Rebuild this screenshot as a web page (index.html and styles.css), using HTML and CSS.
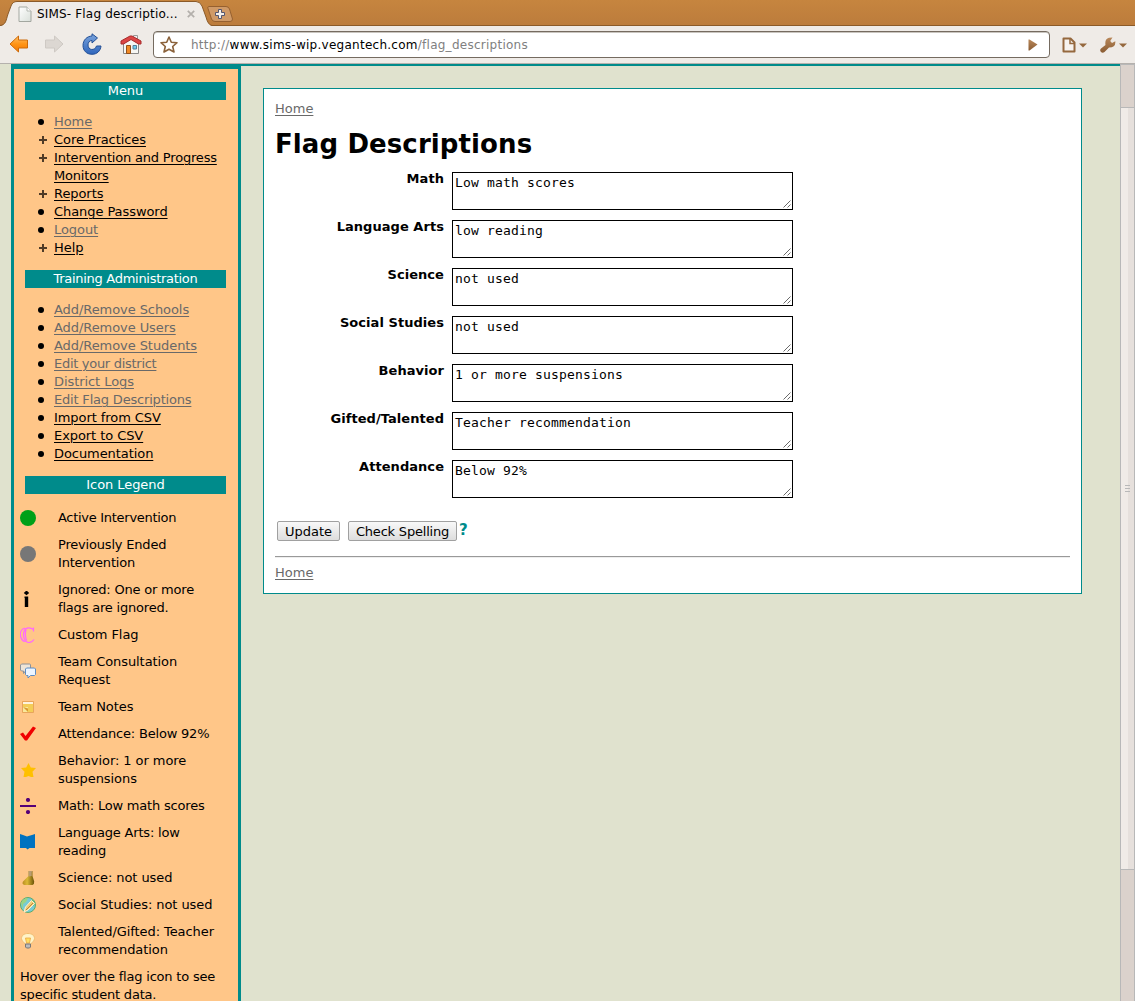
FILE: index.html
```html
<!DOCTYPE html>
<html lang="en">
<head>
<meta charset="utf-8">
<title>SIMS- Flag descriptions</title>
<link rel="stylesheet" href="styles.css">
</head>
<body>
<svg class="defs" width="0" height="0">
  <defs>
    <linearGradient id="brown" x1="0" y1="0" x2="0" y2="1"><stop offset="0" stop-color="#b9885a"/><stop offset="1" stop-color="#8a5c33"/></linearGradient>
    <linearGradient id="orange" x1="0" y1="0" x2="0" y2="1"><stop offset="0" stop-color="#ffc168"/><stop offset=".5" stop-color="#ff9416"/><stop offset="1" stop-color="#f57900"/></linearGradient>
    <linearGradient id="blue" x1="0" y1="0" x2="0" y2="1"><stop offset="0" stop-color="#7ba4dc"/><stop offset="1" stop-color="#2f66bd"/></linearGradient>
    <linearGradient id="paper" x1="0" y1="0" x2="1" y2="1"><stop offset="0" stop-color="#fff"/><stop offset="1" stop-color="#d9dfd9"/></linearGradient>
    <linearGradient id="flask" x1="0" y1="0" x2="1" y2="0"><stop offset="0" stop-color="#b98c22"/><stop offset=".4" stop-color="#dcb935"/><stop offset="1" stop-color="#6a5208"/></linearGradient>
    <symbol id="grip" viewBox="0 0 8 8"><path d="M.5 7.500l7-7M4.500 7.500l3-3" fill="none" stroke="#444" stroke-width=".8"/></symbol>
  </defs>
</svg>

<header class="tabstrip">
  <div class="tab">
    <svg class="tab-shape" width="212" height="26" viewBox="0 0 212 26"><path d="M0 26C6 25 6 20 8 14L11 6Q12.500 1.500 17 1.500H196Q200 1.500 202 6L206 17Q208 25 212 26Z" fill="#efebe7"/><path d="M0 25.500C6 25 6 20 8 14L11 6Q12.500 1.500 17 1.500H196Q200 1.500 202 6L206 17Q208 25 212 25.500" fill="none" stroke="#8b5a28"/></svg>
    <svg class="tab-page" width="14" height="17" viewBox="0 0 14 17"><path d="M1 1h8l4 4v10.500h-12z" fill="url(#paper)" stroke="#a3a7a0"/><path d="M9 1v4h4" fill="#fff" stroke="#b4b8b2"/></svg>
    <span class="tab-title">SIMS- Flag descriptio...</span>
    <svg class="tab-close" width="8" height="8" viewBox="0 0 8 8"><path d="M.8.800l6.400 6.400M7.200.800L.8 7.200" stroke="#b3afab" stroke-width="1.700"/></svg>
  </div>
  <svg class="newtab" width="26" height="16" viewBox="0 0 26 16"><path d="M1.500.500H19Q21.500.500 22.500 3L25.500 13Q25.500 15.500 23 15.500H8Q5.500 15.500 4.500 13L1 2.500Q.5.500 1.500.500Z" fill="#d09a67" stroke="#96602f"/><path d="M11.500 3.500h3v3h3v3h-3v3h-3v-3h-3v-3h3z" fill="#f3efeb" stroke="#55566e"/></svg>
</header>

<nav class="toolbar">
  <svg class="back" width="20" height="18" viewBox="0 0 20 18"><path d="M9.500 1v4H18.500v8H9.500v4L1 9z" fill="url(#orange)" stroke="#cd6a0a" stroke-linejoin="round"/></svg>
  <svg class="forward" width="20" height="18" viewBox="0 0 20 18"><path d="M10.500 1v4H1.500v8H10.500v4L19 9z" fill="#dcd7d2" stroke="#cec9c4" stroke-linejoin="round"/></svg>
  <svg class="reload" width="20" height="22" viewBox="0 0 20 22"><path d="M10 3V.8L15.500 5 10 10V7.500C7.500 7.500 6 9.500 6 12C6 17.500 13 18 14.500 13H19C18.500 18 15 21.300 10 21.300C4.500 21.300 1 17.500 1 12.500C1 7 5 3.200 10 3Z" fill="url(#blue)" stroke="#234f95" stroke-linejoin="round"/></svg>
  <svg class="house" width="22" height="21" viewBox="0 0 22 21"><path d="M13.500 1.500h4v6h-4z" fill="#eee" stroke="#999"/><path d="M4 9L11 3l7.500 6v10.500H3.500V9z" fill="#f6f6f3" stroke="#888"/><path d="M1 10V7L10 2h2L21 7v3h-2.500L11 5.500 3.500 10z" fill="#dc4545" stroke="#a82c2c" stroke-linejoin="round"/><path d="M6.500 11.500h4v8h-4z" fill="#f18a25" stroke="#93501a"/><path d="M13 11.500h3.500v3.500H13z" fill="#71cfee" stroke="#557d98"/></svg>
  <div class="address">
    <svg class="bookmark" width="18" height="17" viewBox="0 0 18 17"><path d="M9 1l2.300 5.200 5.700.500-4.300 3.800 1.300 5.500L9 13.200 4 16l1.300-5.500L1 6.700l5.700-.5z" fill="#fff" stroke="#8b623b" stroke-width="1.600" stroke-linejoin="round"/></svg>
    <span class="url">http://<b>www.sims-wip.vegantech.com</b>/flag_descriptions</span>
    <svg class="go" width="10" height="12" viewBox="0 0 10 12"><path d="M.5.500h1l8 5-8 6h-1z" fill="url(#brown)"/></svg>
  </div>
  <svg class="pagemenu" width="25" height="16" viewBox="0 0 25 16"><path d="M1.500 1.500h7l4 4v9h-11z" fill="#f7f3ef" stroke="#95683e" stroke-width="2" stroke-linejoin="round"/><path d="M8 1.500v5h5" fill="none" stroke="#95683e" stroke-width="1.500"/><path d="M17 6.500h8l-4 4z" fill="#95683e"/></svg>
  <svg class="wrench" width="27" height="16" viewBox="0 0 27 16"><path d="M.8 14.800Q-.5 13 1 11.500L5.500 8Q4.500 2 9 .8L12.500.5 10.200 4l1.800 2 3.300-1.800Q16 10.500 9 10.500L4.500 15Q2.500 16.500.8 14.800Z" fill="url(#brown)"/><path d="M19 6.500h8l-4 4z" fill="#95683e"/></svg>
</nav>

<div class="viewport">
  <div class="page">
    <aside class="sidebar">
      <h2>Menu</h2>
      <ul>
        <li><a class="visited" href="#">Home</a></li>
        <li class="plus"><a href="#">Core Practices</a></li>
        <li class="plus tight"><a href="#">Intervention and Progress Monitors</a></li>
        <li class="plus"><a href="#">Reports</a></li>
        <li><a href="#">Change Password</a></li>
        <li><a class="visited" href="#">Logout</a></li>
        <li class="plus"><a href="#">Help</a></li>
      </ul>
      <h2 class="tighter">Training Administration</h2>
      <ul>
        <li><a class="visited" href="#">Add/Remove Schools</a></li>
        <li><a class="visited" href="#">Add/Remove Users</a></li>
        <li><a class="visited" href="#">Add/Remove Students</a></li>
        <li class="tighter"><a class="visited" href="#">Edit your district</a></li>
        <li><a class="visited" href="#">District Logs</a></li>
        <li class="tight"><a class="visited" href="#">Edit Flag Descriptions</a></li>
        <li><a href="#">Import from CSV</a></li>
        <li><a href="#">Export to CSV</a></li>
        <li><a href="#">Documentation</a></li>
      </ul>
      <h2>Icon Legend</h2>
      <div class="legend">
        <div class="entry tighter"><svg viewBox="0 0 16 16"><circle cx="8" cy="8" r="8" fill="#00a018"/></svg><span>Active Intervention</span></div>
        <div class="entry tight"><svg viewBox="0 0 16 16"><circle cx="8" cy="8" r="8" fill="#777"/></svg><span>Previously Ended Intervention</span></div>
        <div class="entry tight"><svg viewBox="0 0 16 16"><path d="M6.500-.5l2.700 2.500-2.700 2.300L3.800 2zM4.500 5.500H8.200V16H4.800V7h-.3z" fill="#000"/></svg><span>Ignored: One or more flags are ignored.</span></div>
        <div class="entry"><svg viewBox="0 0 16 16"><path d="M13.500 4.500V.500M13.500 2.500C10 0 5.500 0 4 4.500C2.500 9 4.500 15.500 9 15.500Q12 15.500 14 12.500M5 1C1 2-.5 6 .8 10Q2 14 5 14.500M6 2.500Q4.500 8 6.500 13.500" fill="none" stroke="#ff66ff" stroke-width="1.200"/></svg><span>Custom Flag</span></div>
        <div class="entry"><svg viewBox="0 0 16 16"><path d="M1.500 1h8q1 0 1 1v5q0 1-1 1H5.500L3.500 10.500V8H1.500L.5 7V2z" fill="#eee4d8" stroke="#8d929a"/><path d="M6.500 5h8l1 1v5.500l-1 1h-4L8 15v-2.500H6.500l-1-1V6z" fill="#edf5ff" stroke="#5c8cc4"/></svg><span>Team Consultation Request</span></div>
        <div class="entry"><svg viewBox="0 0 16 16"><path d="M2.500 2.500h11v11h-11z" fill="#f4cd57" stroke="#e8a55c"/><path d="M3 3h10v2H3z" fill="#fff3dc"/><path d="M3 8h5v5H3z" fill="#fae99a"/><path d="M3 8l5 5V9.500z" fill="#d99a31"/></svg><span>Team Notes</span></div>
        <div class="entry tight"><svg viewBox="0 0 16 16"><path d="M0 8l3-1.500 2.500 3.500L13 .5l3 1.500-9 12.500H5z" fill="#f00000"/></svg><span>Attendance: Below 92%</span></div>
        <div class="entry"><svg viewBox="0 0 16 16"><path d="M8.500 1l2.300 4.500 5.200.500-3.500 3.800 1 5.200H11l-2.500-1L6 15H3.500l1-5.200L1 6l5.200-.5z" fill="#ffc000"/></svg><span>Behavior: 1 or more suspensions</span></div>
        <div class="entry tight"><svg viewBox="0 0 16 16"><path d="M0 7h16v2H0z" fill="#550077"/><circle cx="8" cy="2" r="2.100" fill="#550077"/><circle cx="8" cy="14" r="2.100" fill="#550077"/></svg><span>Math: Low math scores</span></div>
        <div class="entry tight"><svg viewBox="0 0 16 16"><path d="M0 0l3 1 4 1.500L8.500 2 12 1l3-1v14H9.500L7.500 15.500 6 14H0z" fill="#0072c0"/></svg><span>Language Arts: low reading</span></div>
        <div class="entry"><svg viewBox="0 0 16 16"><path d="M8.500 1h4v5l1.700 5.500q.3 2.500-1.700 3.500H4.500q-3-1-1.500-3.500L8.500 6z" fill="url(#flask)"/><path d="M8.500 1h4l-.8 1v4l-3.200.5z" fill="#ba9d73"/></svg><span>Science: not used</span></div>
        <div class="entry"><svg viewBox="0 0 16 16"><circle cx="8" cy="8" r="7.500" fill="#78cbd5" stroke="#5dab6d"/><path d="M1 6Q3 1 8 1L6 5 3 7v5z" fill="#9bd583"/><path d="M12 2l3 4-1 3-3-3z" fill="#71bc67"/><path d="M4 15l1.500-5 6-6.500 3 3-6.500 6.500z" fill="#f3cd75" stroke="#fff1d0"/><path d="M6 13l7-7" stroke="#bd873b"/></svg><span>Social Studies: not used</span></div>
        <div class="entry"><svg viewBox="0 0 16 16"><path d="M8 .5C4 .5 1.500 2.500 1.500 5.500C1.500 8 4 9 5 11h6C12 9 14.500 8 14.500 5.500C14.500 2.500 12 .5 8 .5Z" fill="#fff3c8" stroke="#f0bd70"/><path d="M5.500 5h5l-1 5h-3z" fill="#ffdf62" stroke="#eba33f" stroke-width=".8"/><path d="M5.500 11h5v3l-1 1h-3l-1-1z" fill="#bbb" stroke="#777"/></svg><span>Talented/Gifted: Teacher recommendation</span></div>
        <p class="tight">Hover over the flag icon to see specific student data.</p>
      </div>
    </aside>

    <main class="content">
      <a class="visited" href="#">Home</a>
      <h1>Flag Descriptions</h1>
      <form>
        <div class="field"><label for="f1">Math</label><div class="box"><textarea id="f1">Low math scores</textarea><svg><use href="#grip"/></svg></div></div>
        <div class="field"><label for="f2">Language Arts</label><div class="box"><textarea id="f2">low reading</textarea><svg><use href="#grip"/></svg></div></div>
        <div class="field"><label for="f3">Science</label><div class="box"><textarea id="f3">not used</textarea><svg><use href="#grip"/></svg></div></div>
        <div class="field"><label for="f4">Social Studies</label><div class="box"><textarea id="f4">not used</textarea><svg><use href="#grip"/></svg></div></div>
        <div class="field"><label for="f5">Behavior</label><div class="box"><textarea id="f5">1 or more suspensions</textarea><svg><use href="#grip"/></svg></div></div>
        <div class="field"><label for="f6">Gifted/Talented</label><div class="box"><textarea id="f6">Teacher recommendation</textarea><svg><use href="#grip"/></svg></div></div>
        <div class="field"><label for="f7">Attendance</label><div class="box"><textarea id="f7">Below 92%</textarea><svg><use href="#grip"/></svg></div></div>
        <div class="actions"><button class="update" type="button">Update</button><button class="spell" type="button">Check Spelling</button><span class="help">?</span></div>
      </form>
      <hr>
      <a class="visited" href="#">Home</a>
    </main>
  </div>
  <div class="scrollbar"><div class="thumb"><i></i><i></i><i></i></div></div>
</div>
</body>
</html>
```
FILE: styles.css
```css
* { box-sizing: border-box; }
body {
  margin: 0;
  width: 1135px;
  height: 1001px;
  overflow: hidden;
  display: flex;
  flex-direction: column;
  background: #e0e2ce;
  color: #000;
  font: 13px/18px "DejaVu Sans", sans-serif;
}
svg { display: block; flex: none; }
.defs { position: absolute; }

.tabstrip {
  flex: none;
  height: 26px;
  display: flex;
  background: linear-gradient(#c6853f, #bc7c3c);
  border-bottom: 1px solid #8b5a28;
}
.tab {
  position: relative;
  width: 212px;
  height: 26px;
  display: flex;
  align-items: flex-start;
}
.tab-shape { position: absolute; left: 0; top: 0; }
.tab-page { position: relative; margin: 6px 0 0 18px; }
.tab-title { position: relative; width: 146px; margin: 5px 0 0 5px; font-size: 12px; letter-spacing: .17px; white-space: nowrap; }
.tab-close { position: relative; margin: 10px 0 0 4px; }
.newtab { margin: 6px 0 0 -5px; }

.toolbar {
  flex: none;
  height: 38px;
  display: flex;
  align-items: center;
  background: #efebe7;
  border-bottom: 1px solid #b5b1ad;
}
.back { margin-left: 9px; margin-top: -1px; }
.forward { margin-left: 15px; margin-top: -1px; }
.reload { margin-left: 18px; margin-top: -1px; }
.house { margin-left: 18px; margin-top: -1px; }
.address {
  width: 897px;
  height: 27px;
  margin: 0 0 0 11px;
  padding: 0 11px 0 6px;
  display: flex;
  align-items: center;
  background: #fff;
  border: 1px solid #756b60;
  border-radius: 4px;
  box-shadow: inset 0 1px #c9c5bf;
}
.url { flex: 1; margin-left: 13px; font-size: 12px; letter-spacing: .26px; color: #808080; }
.url b { font-weight: normal; color: #000; }
.pagemenu { margin-left: 12px; }
.wrench { margin-left: 13px; }

.viewport { flex: 1; min-height: 0; display: flex; }
.page {
  flex: 1;
  min-width: 0;
  margin-left: 11px;
  display: flex;
  align-items: flex-start;
  border-top: 2px solid #008b8b;
}
a { color: #000; text-decoration: underline; text-underline-offset: 2px; text-decoration-thickness: 1px; }
a.visited { color: #696969; }

.sidebar {
  flex: none;
  width: 230px;
  height: 960px;
  border: 3px solid #008b8b;
  background: #ffc688;
  letter-spacing: -.07px;
}
.sidebar .tight { letter-spacing: -.19px; }
.sidebar .tighter { letter-spacing: -.29px; }
.sidebar h2 {
  margin: 13px 12px 13px 11px;
  height: 18px;
  background: #008b8b;
  color: #fff;
  font-size: 13px;
  font-weight: normal;
  text-align: center;
}
.sidebar ul { margin: 0; padding: 0 12px 0 40px; list-style: none; }
.sidebar li { position: relative; }
.sidebar li::before {
  content: "";
  position: absolute;
  left: -16px;
  top: 6px;
  width: 6px;
  height: 6px;
  border-radius: 50%;
  background: #000;
}
.sidebar li.plus::before {
  left: -15px;
  top: 5px;
  width: 8px;
  height: 8px;
  border-radius: 0;
  background: linear-gradient(#4f3b27, #4f3b27) 0 3px / 8px 2px no-repeat, linear-gradient(#4f3b27, #4f3b27) 3px 0 / 2px 8px no-repeat;
}
.legend { padding: 2px 12px 0 6px; display: flex; flex-direction: column; gap: 9px; }
.entry { display: flex; align-items: center; gap: 22px; }
.entry svg { width: 16px; height: 16px; }
.legend p { margin: 0; }

.content {
  width: 819px;
  height: 506px;
  margin: 22px 0 0 22px;
  padding: 11px;
  background: #fff;
  border: 1px solid #008b8b;
}
.content > a { display: block; width: max-content; }
h1 { margin: 11px 0 13px; font-size: 26px; line-height: 30px; letter-spacing: .1px; }
.field { display: flex; height: 38px; margin-bottom: 10px; }
.field label { width: 169px; margin-right: 8px; margin-top: -2px; text-align: right; font-weight: bold; letter-spacing: .05px; }
.box { position: relative; width: 341px; }
.box textarea {
  display: block;
  width: 100%;
  height: 38px;
  margin: 0;
  padding: 2px;
  border: 1px solid #000;
  border-radius: 0;
  background: #fff;
  color: #000;
  resize: none;
  overflow: hidden;
  font: 13px/16px "DejaVu Sans Mono", monospace;
  letter-spacing: .175px;
}
.box svg { position: absolute; right: 2px; bottom: 2px; width: 8px; height: 8px; }
.actions { display: flex; padding: 13px 0 0 2px; }
button {
  height: 20px;
  padding: 0;
  border: 1px solid #a0a0a0;
  border-radius: 2px;
  background: linear-gradient(#f8f8f8, #ddd);
  color: #000;
  font: 13px/17px "DejaVu Sans", sans-serif;
  white-space: nowrap;
}
.update { width: 63px; }
.spell { width: 109px; margin-left: 8px; letter-spacing: -.2px; }
.help { margin-left: 2px; color: #008b8b; font-weight: bold; font-size: 15px; line-height: 18px; }
hr { margin: 15px 0 6px; height: 2px; border: 0; border-top: 1px solid #999; border-bottom: 1px solid #eee; }

.scrollbar {
  flex: none;
  width: 15px;
  padding-top: 42px;
  background: #dbd2cc;
  border: solid #b8b8b8;
  border-width: 1px 1px 0;
}
.thumb {
  height: 763px;
  display: flex;
  flex-direction: column;
  align-items: center;
  justify-content: center;
  gap: 2px;
  border: solid #b8b8b8;
  border-width: 1px 0;
  background: linear-gradient(90deg, #f0ebe7 7px, #e6e0dc 7px);
}
.thumb i { width: 5px; height: 1px; background: #b8b8b8; }
```
